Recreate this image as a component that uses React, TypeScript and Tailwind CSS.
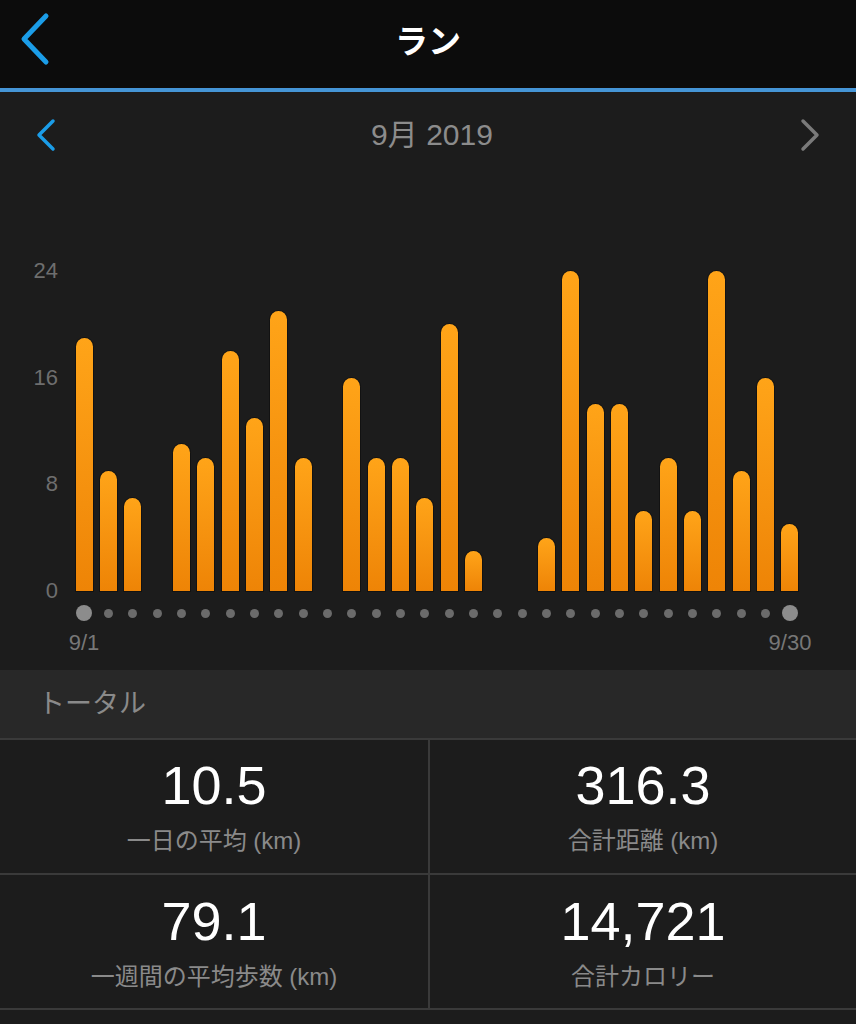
import React from "react";

const values = [19, 9, 7, 0, 11, 10, 18, 13, 21, 10, 0, 16, 10, 10, 7, 20, 3, 0, 0, 4, 24, 14, 14, 6, 10, 6, 24, 9, 16, 5];
const UNIT = 320 / 24;

const font = { fontFamily: '"Liberation Sans", "Noto Sans CJK JP", sans-serif' };

function Cell({ value, label, top }: { value: string; label: string; top: string }) {
  return (
    <div className={`bg-[#1c1c1c] flex flex-col items-center ${top}`}>
      <div className="text-[54px] leading-[54px] h-[54px] text-white">{value}</div>
      <div className="mt-[15px] text-[24px] leading-[28px] text-[#8a8a8a]">{label}</div>
    </div>
  );
}

export default function App() {
  return (
    <div className="w-[856px] h-[1024px] bg-[#1c1c1c] overflow-hidden" style={font}>
      {/* Header */}
      <div className="h-[88px] bg-[#0c0c0c] flex items-center justify-center relative">
        <svg className="absolute left-[18px] top-[12px]" width="34" height="54" viewBox="0 0 34 54">
          <polyline points="28,4 6,27 28,50" fill="none" stroke="#1b9de8" strokeWidth="5" strokeLinecap="round" strokeLinejoin="round" />
        </svg>
        <div className="text-white font-bold text-[33px] leading-none mb-[6px]">ラン</div>
      </div>
      <div className="h-[4px] bg-[#4595d6]" />

      {/* Month nav */}
      <div className="h-[86px] flex items-center justify-between px-[34px]">
        <svg width="24" height="34" viewBox="0 0 24 34">
          <polyline points="19,3 5,17 19,31" fill="none" stroke="#1b9de8" strokeWidth="3.5" strokeLinecap="round" strokeLinejoin="round" />
        </svg>
        <div className="text-[30px] leading-none text-[#8c8c8c] pl-[8px]">9月 2019</div>
        <svg width="24" height="34" viewBox="0 0 24 34">
          <polyline points="5,3 19,17 5,31" fill="none" stroke="#7a7a7a" strokeWidth="3.5" strokeLinecap="round" strokeLinejoin="round" />
        </svg>
      </div>

      {/* Chart */}
      <div className="h-[82px]" />
      <div className="flex h-[342px]">
        <div className="w-[72px] pr-[14px] flex flex-col justify-between items-end text-[22px] leading-[22px] text-[#6e6e6e]">
          <span>24</span>
          <span>16</span>
          <span>8</span>
          <span>0</span>
        </div>
        <div className="w-[730px] flex items-end pt-[11px] pb-[11px]">
          {values.map((v, i) => (
            <div key={i} className="flex-1 flex justify-center items-end h-full">
              {v > 0 && (
                <div
                  className="w-[17px] rounded-t-full bg-linear-to-b from-[#ffa418] to-[#ee8406] shadow-[0_0_0_1px_rgba(0,0,0,0.35)]"
                  style={{ height: `${v * UNIT}px` }}
                />
              )}
            </div>
          ))}
        </div>
      </div>
      {/* Dots */}
      <div className="flex h-[16px] mt-[3px] pl-[72px]">
        <div className="w-[730px] flex items-center">
          {values.map((_, i) => (
            <div key={i} className="flex-1 flex justify-center items-center">
              {i === 0 || i === values.length - 1 ? (
                <div className="w-[16px] h-[16px] rounded-full bg-[#8c8c8c]" />
              ) : (
                <div className="w-[9px] h-[9px] rounded-full bg-[#6b6b6b]" />
              )}
            </div>
          ))}
        </div>
      </div>
      <div className="flex h-[22px] mt-[11px] pl-[72px] text-[22px] leading-[22px] text-[#777777]">
        <div className="w-[730px] flex justify-between">
          <div className="w-[24px] flex justify-center whitespace-nowrap">9/1</div>
          <div className="w-[24px] flex justify-center whitespace-nowrap">9/30</div>
        </div>
      </div>
      <div className="h-[16px]" />

      {/* Totals header */}
      <div className="h-[68px] bg-[#282828] flex items-center pl-[38px]">
        <span className="text-[27px] leading-none text-[#8a8a8a]">トータル</span>
      </div>

      {/* Grid */}
      <div className="grid grid-cols-[428px_426px] grid-rows-[133px_133px] gap-[2px] bg-[#3a3a3a] py-[2px]">
        <Cell value="10.5" label="一日の平均 (km)" top="pt-[18px]" />
        <Cell value="316.3" label="合計距離 (km)" top="pt-[18px]" />
        <Cell value="79.1" label="一週間の平均歩数 (km)" top="pt-[19px]" />
        <Cell value="14,721" label="合計カロリー" top="pt-[19px]" />
      </div>
    </div>
  );
}
